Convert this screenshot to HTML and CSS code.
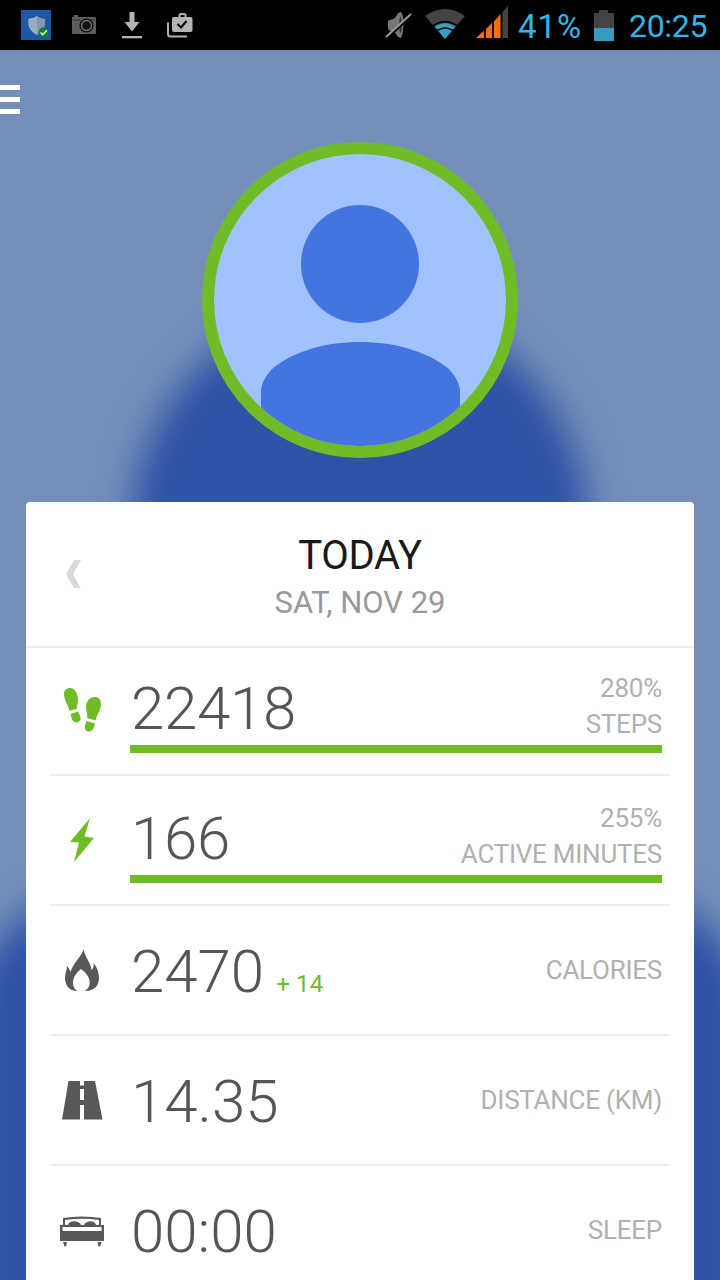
FILE: index.html
```
<!DOCTYPE html>
<html>
<head>
    <meta charset="utf-8">
    <title>Today</title>
    <link rel="stylesheet" href="styles.css">
</head>
<body>
    <div class="status-bar">
        <div class="status-left">
            <svg width="30" height="30" viewBox="0 0 30 30">
                <rect width="30" height="30" fill="#1d58a5"/>
                <path d="M16 6Q20 9 24 9V15Q23 21 16 25Q9 21 7.500 15V9Q12 9 16 6Z" fill="#8199b5"/>
                <path d="M16 6V25Q9 21 7.500 15V9Q12 9 16 6Z" fill="#9aadc2"/>
                <circle cx="22.500" cy="22.500" r="5" fill="#108528"/>
                <path d="M19.500 22.500L21.700 24.600L26 20.300" fill="none" stroke="#d5e8d5" stroke-width="1.500"/>
            </svg>
            <svg class="camera" width="26" height="20" viewBox="0 0 26 20">
                <path d="M1 2H2.500V0H7V2H24Q25 2 25 3V18Q25 19 24 19H2Q1 19 1 18V3Z" fill="#5c5c5c"/>
                <path d="M2 5H9M20 5H24" stroke="#2a2a2a" stroke-width="1"/>
                <circle cx="15.500" cy="10.500" r="7" fill="#0c0c0c"/>
                <circle cx="15.500" cy="10.500" r="5" fill="#111" stroke="#777" stroke-width="1.300"/>
            </svg>
            <svg class="download" width="20" height="27" viewBox="0 0 20 27">
                <path d="M7.500 0H12.500V10H17.500L10 19.500L2.500 10H7.500Z" fill="#b3b3b3"/>
                <rect x="0" y="24" width="20" height="2.300" fill="#b3b3b3"/>
            </svg>
            <svg class="work" width="26" height="25" viewBox="0 0 26 25">
                <path d="M1 9.500V21Q1 23.500 3.500 23.500H20" fill="none" stroke="#b3b3b3" stroke-width="2"/>
                <path d="M12.500 4.500V2.500Q12.500 1 14 1H17Q18.500 1 18.500 2.500V4.500" fill="none" stroke="#b3b3b3" stroke-width="2"/>
                <rect x="5" y="4" width="20.500" height="15" rx="2" fill="#b3b3b3"/>
                <path d="M10.500 11L14 14.500L19.500 8" fill="none" stroke="#000" stroke-width="2"/>
            </svg>
        </div>
        <div class="status-right">
            <svg class="mute" width="27" height="28" viewBox="0 0 27 28">
                <path d="M3 10L6 8.500Q10 9 13 2L16 1Q19 5 18.500 14Q18 23 16 27L13 26Q10 20 5 20L3 18Z" fill="#777"/>
                <ellipse cx="15.500" cy="14" rx="1.300" ry="8" fill="#333"/>
                <path d="M1.500 27.500L26 4.500" stroke="#000" stroke-width="3"/>
                <path d="M1 26L26 3" stroke="#999" stroke-width="2"/>
            </svg>
            <svg class="wifi" width="40" height="32" viewBox="0 0 40 32">
                <path d="M0 9Q20 -5 40 9L20 32Z" fill="#444"/>
                <path d="M10 20Q20 12.500 30 20L20 32Z" fill="#359fc4"/>
                <path d="M7.500 19Q20 10.500 32.500 19M12 23.500Q20 18.500 28 23.500" fill="none" stroke="#000" stroke-width="1.600"/>
            </svg>
            <svg class="signal" width="33" height="32" viewBox="0 0 33 32">
                <path d="M0 32L8 24.500V32ZM10 23L16 17V32H10ZM18 15.500L24.500 8V32H18Z" fill="#ff6c0a"/>
                <path d="M26.500 6L32 0V32H26.500Z" fill="#444"/>
            </svg>
            <span class="percent">41%</span>
            <svg class="battery" width="20" height="31" viewBox="0 0 20 31">
                <path d="M5 0H14V3H20V18H0V3H5Z" fill="#444"/>
                <rect y="18" width="20" height="13" fill="#369bbd"/>
            </svg>
            <span class="clock">20:25</span>
        </div>
    </div>

    <div class="profile">
        <svg class="backdrop" width="720" height="1230" viewBox="0 50 720 1230">
            <circle cx="360" cy="529" r="228"/>
            <path d="M-26 1400V1004C-26 910 134 830 360 830S746 910 746 1004V1400Z"/>
        </svg>
        <div class="menu">
            <span></span>
            <span></span>
            <span></span>
        </div>
        <div class="avatar">
            <svg width="292" height="292" viewBox="0 0 292 292">
                <circle cx="146" cy="110" r="59"/>
                <path d="M47 292V238C47 230 51 223 58 215C78 198 110 188 146 188S214 198 235 215C242 223 246 230 246 238V292Z"/>
            </svg>
        </div>

        <div class="card">
            <div class="card-header">
                <svg class="prev" width="15" height="28" viewBox="0 0 15 28">
                    <path d="M8.500 0H15L7 14L14.500 28H8L0 14Z" fill="#d8d8d8"/>
                </svg>
                <div class="title">TODAY</div>
                <div class="date">SAT, NOV 29</div>
            </div>
            <div class="row goal">
                <svg class="icon green" width="64" height="60" viewBox="50 680 64 60">
                    <path d="M64 695C63.500 690 66.500 688 70 688C75 688 78 694 78 700C78 704 76.500 706 77 708.500L69.500 711C68.500 706 65 702 64 695Z"/>
                    <path d="M70.500 714L78 711.500C79 714 81 716 80.500 719C80 722 77 723 74.500 722C71.500 720.500 71.500 717 70.500 714Z"/>
                    <path d="M95 697C99 697 101 700 101 704C101 711 97 714 95.500 720.500L87 718C88 714 86 711 86 707C86 701 90 697 95 697Z"/>
                    <path d="M86.500 721L95 723.500C94 727 93 732 88.500 731.500C83 730.500 85 725 86.500 721Z"/>
                </svg>
                <div class="value">22418</div>
                <div class="label">280%<br>STEPS</div>
                <div class="bar"></div>
            </div>
            <div class="row goal">
                <svg class="icon green" width="64" height="60" viewBox="50 810 64 60">
                    <path d="M90 818L70 842L79 842.500L74 862L94 838L84.500 836.500Z"/>
                </svg>
                <div class="value">166</div>
                <div class="label">255%<br>ACTIVE MINUTES</div>
                <div class="bar"></div>
            </div>
            <div class="row">
                <svg class="icon" width="64" height="60" viewBox="50 940 64 60">
                    <path d="M84 949C84 957 91 962 91.500 970C93.500 968 94 966 93.500 963C97 967 99 972 99 978C99 985 95 991 84.500 991C92 987 92 977 81 969C71 977 71 987 77.500 991C69 991 65 985 65 978C65 973 67 970 67 966C69 968 69.500 970 70.500 972C73 963 81 957 84 949Z"/>
                </svg>
                <div class="value">2470<span class="extra">+ 14</span></div>
                <div class="label">CALORIES</div>
            </div>
            <div class="row">
                <svg class="icon" width="64" height="60" viewBox="50 1070 64 60">
                    <path d="M68.500 1081H80V1085.500H84V1081H95L102.500 1119.500H84V1105H80V1119.500H62ZM80 1089V1100H84V1089Z" fill-rule="evenodd"/>
                </svg>
                <div class="value">14.35</div>
                <div class="label">DISTANCE (KM)</div>
            </div>
            <div class="row">
                <svg class="icon" width="64" height="60" viewBox="50 1200 64 60">
                    <path d="M63 1225V1218Q82 1215 101 1218V1225H104V1241H60V1225ZM65 1220V1225H68C69 1220 79 1220 81 1225H84C86 1220 95 1220 96 1225H99V1220Q82 1217.500 65 1220ZM62.500 1227V1231H101.500V1227Z" fill-rule="evenodd"/>
                    <path d="M63 1242H67L66 1246.500H64.500ZM97.500 1242H101.500L100 1246.500H98.500Z"/>
                </svg>
                <div class="value">00:00</div>
                <div class="label">SLEEP</div>
            </div>
        </div>
    </div>
</body>
</html>
```
FILE: styles.css
```
body {
    margin: 0;
    width: 720px;
    height: 1280px;
    overflow: hidden;
    font-family: Roboto, sans-serif;
}
svg {
    display: block;
    flex: none;
}
.status-bar {
    display: flex;
    justify-content: space-between;
    height: 50px;
    background-color: #000;
}
.status-left {
    display: flex;
    align-items: center;
    padding-left: 21px;
}
.camera {
    margin-left: 20px;
}
.download {
    margin-left: 25px;
}
.work {
    margin-left: 25px;
}
.status-right {
    display: flex;
    align-items: center;
    padding-right: 12px;
    color: #33b5e5;
}
.wifi {
    margin: -4px 0 0 13px;
}
.signal {
    margin: -6px 0 0 11px;
}
.percent {
    width: 64px;
    margin: 2px 0 0 9px;
    font-size: 33px;
    letter-spacing: 1px;
    white-space: nowrap;
}
.battery {
    margin-left: 12px;
}
.clock {
    width: 79px;
    margin: 2px 0 0 15px;
    font-size: 32px;
    letter-spacing: -0.3px;
}
.profile {
    position: relative;
    height: 1230px;
    overflow: hidden;
    background-color: #738eb9;
}
.backdrop {
    position: absolute;
    top: 0;
    left: 0;
    overflow: visible;
    fill: #2f53a6;
    filter: blur(17px);
}
.menu {
    display: flex;
    position: relative;
    flex-direction: column;
    gap: 7px;
    width: 20px;
    padding-top: 35px;
}
.menu span {
    height: 5px;
    background-color: #fff;
}
.avatar {
    position: relative;
    width: 292px;
    height: 292px;
    margin: 28px auto 0;
    border: 12px solid #70bc26;
    border-radius: 50%;
    overflow: hidden;
    background-color: #a0c2ff;
    fill: #4374e0;
}
.card {
    position: relative;
    height: 800px;
    margin: 44px 26px 0;
    border-radius: 4px 4px 0 0;
    background-color: #fff;
}
.card-header {
    position: relative;
    box-sizing: border-box;
    height: 146px;
    padding-top: 31px;
    border-bottom: 2px solid #ededed;
    text-align: center;
}
.prev {
    position: absolute;
    left: 40px;
    top: 58px;
}
.title {
    font-size: 40px;
    line-height: 46px;
    letter-spacing: -0.3px;
    color: #1a1a1a;
}
.date {
    font-size: 31px;
    line-height: 48px;
    color: #999;
}
.row {
    display: grid;
    grid-template-columns: 80px 1fr auto;
    grid-template-rows: 128px;
    align-items: center;
    margin: 0 24px;
    padding-right: 8px;
    border-bottom: 2px solid #ededed;
}
.row.goal {
    grid-template-rows: 99px 8px 21px;
}
.row.goal:nth-child(2) {
    grid-template-rows: 97px 8px 21px;
}
.icon {
    fill: #585858;
}
.goal .icon {
    align-self: start;
    margin-top: 34px;
}
.goal:nth-child(2) .icon {
    margin-top: 32px;
}
.green {
    fill: #70bc26;
}
.value {
    display: flex;
    align-items: baseline;
    font-size: 60px;
    font-weight: 300;
    line-height: 70px;
    padding: 4px 0 0 1px;
    color: #555;
}
.goal .value {
    align-self: end;
    padding: 0 0 1px 1px;
    letter-spacing: -0.3px;
}
.extra {
    margin-left: 12px;
    font-size: 24px;
    font-weight: 400;
    line-height: 28px;
    letter-spacing: 0.2px;
    color: #70bc26;
}
.label {
    font-size: 26px;
    line-height: 36px;
    letter-spacing: -0.25px;
    text-align: right;
    color: #b0b0b0;
}
.goal .label {
    align-self: end;
    padding-bottom: 3px;
}
.bar {
    grid-column: 2 / 4;
    height: 8px;
    background-color: #70bc26;
}
```
